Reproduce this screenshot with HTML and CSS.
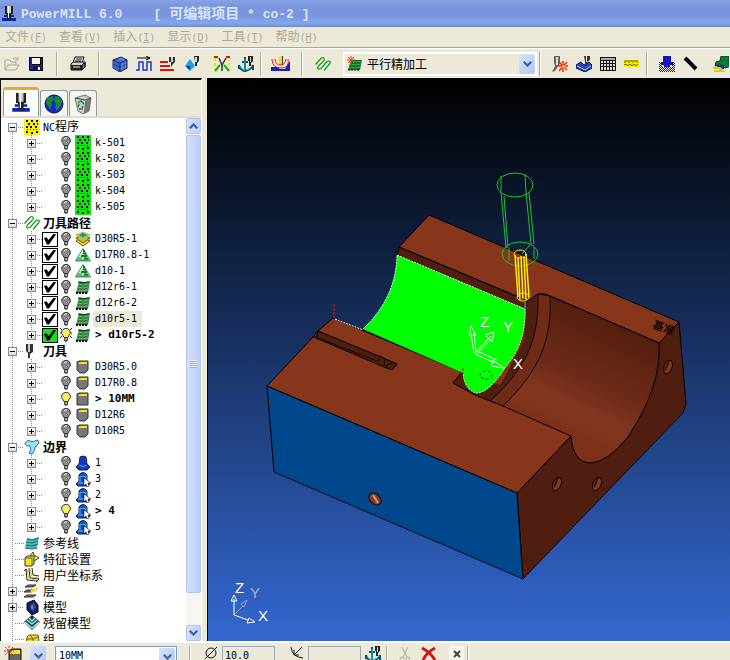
FILE: index.html
```html
<!DOCTYPE html>
<html lang="zh-CN">
<head>
<meta charset="utf-8">
<title>PowerMILL 6.0</title>
<link rel="stylesheet" href="styles.css">
</head>
<body>
<svg class="defs" width="0" height="0" aria-hidden="true">
  <defs>
    <pattern id="dither" width="2" height="2" patternUnits="userSpaceOnUse"><path d="M0 0h1v1H0zM1 1h1v1H1z" fill="#1420c0"/></pattern>
    <symbol id="i-mill" viewBox="0 0 16 16"><path d="M4 6h8v2H4zM3 9h10v2H3zM1 12h14v3H1z" fill="#0a2aa8"/><path d="M4 0h8v7l-2 2v5H6V9L4 7z" fill="#222"/><path d="M6 0h4v7H6z" fill="#c8c8c8"/><path d="M7 0h1v12H7z" fill="#fff"/></symbol>
    <symbol id="i-open" viewBox="0 0 16 16"><path d="M1 14V4h5l1 2h5v3M1 14l3-5h11l-3 5zM9 3q3-3 5 1m0-3v3h-3" fill="none" stroke="#aaa797"/></symbol>
    <symbol id="i-save" viewBox="0 0 16 16"><path d="M1 1h14v14H2l-1-1z" fill="#000"/><path d="M2 2h2v7h9V2h1v12H2z" fill="#1721b8"/><path d="M4 2h8v6H4z" fill="#f3f3ec"/><path d="M5 10h8v4H5z" fill="#10105c"/><path d="M10 11h2v3h-2z" fill="#fff"/></symbol>
    <symbol id="i-print" viewBox="0 0 16 16"><path d="M5 1h9l-2 6H3z" fill="#fff" stroke="#000"/><path d="M6 3h6M5 5h6" stroke="#000"/><path d="M1 8l2-2h12v5l-3 3H1z" fill="#d5d2b8" stroke="#000"/><path d="M1 9h11v5H1z" fill="#222"/><path d="M3 11h7" stroke="#eee"/><path d="M12 9l3-3v5l-3 3z" fill="#777" stroke="#000"/></symbol>
    <symbol id="i-cube" viewBox="0 0 16 16"><path d="M1 4l8-3 6 3v8l-7 4-7-4z" fill="#5b86da" stroke="#0a1c66"/><path d="M1 4l7 3v9l-7-4z" fill="#3b63c4"/><path d="M1 4l7 3 7-3M8 7v9" fill="none" stroke="#0a1c66"/><path d="M4 3l8 3v8M1 8l7 3 7-3" fill="none" stroke="#0a1c66" stroke-width=".5"/></symbol>
    <symbol id="i-feed" viewBox="0 0 16 16"><path d="M1 2h13M10 0l4 2-4 2" fill="none" stroke="#000"/><path d="M0 14h3V6h4v8h4V6h4v9" fill="none" stroke="#123ad8" stroke-width="1.500"/></symbol>
    <symbol id="i-rapid" viewBox="0 0 16 16"><path d="M0 5h8v2H0zM0 9h10v2H0zM0 13h14v2H0z" fill="#e01010"/><path d="M9 1h6v5l-2 2-2 3V6H9z" fill="#333"/><path d="M11 1h2v5h-2z" fill="#ccc"/></symbol>
    <symbol id="i-start" viewBox="0 0 16 16"><path d="M6 3l5 7-5 5-5-5z" fill="#12a4f4"/><path d="M6 5v5H2l4 4z" fill="#0b1b88"/><path d="M10 0h5v5l-2 2v3h-2V6z" fill="#222"/><path d="M11 1h2v5h-2z" fill="#ddd"/></symbol>
    <symbol id="i-lead" viewBox="0 0 16 16"><path d="M1 2v13M15 2v13" stroke="#f3e600" stroke-width="2" stroke-dasharray="3 2"/><path d="M1 15l5-6M15 15l-5-6" stroke="#12b424" stroke-width="2"/><path d="M0 1h4M12 1h4" stroke="#e01010" stroke-width="2"/><path d="M5 2l3 7 4-7M8 9v6" fill="none" stroke="#333" stroke-width="1.500"/></symbol>
    <symbol id="i-anchor" viewBox="0 0 16 16"><path d="M7 1v14M1 9q1 5 6 6 6-1 8-6M4 6h6M1 9v4M15 9v5" fill="none" stroke="#0b4f64" stroke-width="2"/><path d="M7 3v11M2 10q2 4 5 4M8 14q4-1 6-4" fill="none" stroke="#18cbd6"/><path d="M10 0h5v5l-2 2v3h-2V5h-1z" fill="#222"/><path d="M12 1h1v5h-1z" fill="#ddd"/></symbol>
    <symbol id="i-probe" viewBox="0 0 20 16"><path d="M8 0h3v9H8z" fill="#f0df18"/><path d="M11 0h1v9h-1z" fill="#333"/><path d="M1 3q0 9 9 9t7-9M4 3q0 6 6 6 4 0 5-6" fill="none" stroke="#e02018"/><path d="M0 11h6l3 2h5l5-8v10H0z" fill="#1420c0"/></symbol>
    <symbol id="i-path" viewBox="0 0 16 16"><path d="M.5 8.500L6 2.500q2-2 3 0t-1 3l-4 4q-2 2-1 3t3 0l6-7q2-1 3 0t-1 3l-5 6" fill="none" stroke="#0c9a1c" stroke-width="1.200"/></symbol>
    <symbol id="i-finish" viewBox="0 0 16 16"><path d="M4 4h11l-2 10H1z" fill="#176c28"/><path d="M4 5l5 1 6-1M3 8l6 1 5-1M2 11l6 1 5-1" stroke="#35b04c" fill="none"/><path d="M1 14h12" stroke="#111" stroke-dasharray="2 1"/><path d="M4 0v8M0 4h8M1 1l6 6M7 1L1 7" stroke="#e23b22"/></symbol>
    <symbol id="i-collide" viewBox="0 0 16 16"><path d="M2 0h6v8l-5 7-3 1 3-6-1-3z" fill="#666"/><path d="M4 1h2v8H4z" fill="#ddd"/><path d="M11 5v11M6 10h10M7 6l8 8M15 6l-8 9" stroke="#e33012" stroke-width="1.5"/><path d="M10 9h3v3h-3z" fill="#ffb31f"/></symbol>
    <symbol id="i-verify" viewBox="0 0 16 16"><path d="M0 9l5-3 3 3 5-3 3 3v3l-7 4-9-4z" fill="#2448bb" stroke="#0a1550"/><path d="M1 10l8 4 6-4" fill="none" stroke="#a7bdf0"/><path d="M8 0h6v4l-3 2v4H9V5z" fill="#333"/><path d="M10 0h1v6h-1z" fill="#eee"/></symbol>
    <symbol id="i-calc" viewBox="0 0 16 16"><path d="M0 1h16v14H0z" fill="#111"/><path d="M1 2h14v2H1z" fill="#aaa"/><path d="M1 5h2v2H1zm3 0h2v2H4zm3 0h2v2H7zm3 0h2v2h-2zm3 0h2v2h-2zM1 8h2v2H1zm3 0h2v2H4zm3 0h2v2H7zm3 0h2v2h-2zm3 0h2v2h-2zM1 11h2v3H1zm3 0h2v3H4zm3 0h2v3H7zm3 0h2v3h-2zm3 0h2v3h-2z" fill="#ddd"/></symbol>
    <symbol id="i-rule" viewBox="0 0 16 16"><path d="M0 4h15v7H0z" fill="#fff200"/><path d="M1 4v3M3 4v2M5 4v3M7 4v2M9 4v3M11 4v2M13 4v3M0 9l2-1 2 2 2-2 2 2 2-2 2 2 2-2" stroke="#67600a" fill="none"/></symbol>
    <symbol id="i-block" viewBox="0 0 16 16"><path d="M0 6h3v5h10V6h3v10H0z" fill="url(#dither)"/><path d="M4 0h8v6h2v3H2V6h2z" fill="#1018b8"/><path d="M5 9h6v2H5z" fill="#1018b8"/></symbol>
    <symbol id="i-pen" viewBox="0 0 16 16"><path d="M2 2l11 11" stroke="#000" stroke-width="4"/><path d="M1 4l11 11" stroke="#aaa"/></symbol>
    <symbol id="i-sim" viewBox="0 0 16 16"><path d="M8 0h8v7l2 3-6 2-5-4-5 2 1-4 4-1z" fill="#0d7a34" stroke="#093d25"/><path d="M2 9h9v4H7z" fill="#182ab0"/><path d="M0 12h7l3 3H1" fill="none" stroke="#d8cd10" stroke-width="2"/></symbol>
    <symbol id="i-globe" viewBox="0 0 20 20"><circle cx="10" cy="10" r="9" fill="#1523d2" stroke="#08115e"/><path d="M3 4l6-2 1 4-3 2 1 3-2 4-3-4-1-3zM11 2l4 1 3 4-1 4-4 6-2-4 1-3-2-3z" fill="#168c2b"/></symbol>
    <symbol id="i-bin" viewBox="0 0 18 20"><path d="M1 4l10-3 6 3-2 13-6 3-5-3z" fill="#c9c9c4" stroke="#777"/><path d="M11 7l6-3-2 13-5 3z" fill="#777"/><path d="M1 4l10 2 6-2" stroke="#444" fill="none"/><path d="M4 9l3-2 3 3M9 12l-1 3H5M4 13l1-3" fill="none" stroke="#278a38" stroke-width="1.5"/></symbol>
    <symbol id="i-nc" viewBox="0 0 16 16"><path d="M2 1h2v2H2zm5 0h2v2H7zm5 0h2v2h-2zM4 4h2v2H4zm5 0h2v2H9zm4 0h1v2h-1zM2 7h2v2H2zm4 0h2v2H6zm5 0h2v2h-2zM3 10h1v1H3zm3 0h1v1H6zm3 0h1v1H9zm3 0h1v1h-1zM2 12h2v2H2zm5 1h2v2H7zm5-1h2v2h-2z" fill="#111"/></symbol>
    <symbol id="i-bulb" viewBox="0 0 12 16"><path d="M6 1.500a4 4 0 0 1 3 7l-1 2H4l-1-2a4 4 0 0 1 3-7z" fill="currentColor" stroke="#333"/><path d="M4 4q1-2 3-1" stroke="#eee" fill="none"/><path d="M4 11h4v3l-2 1-2-1z" fill="#555"/><path d="M5 12h2" stroke="#ddd"/></symbol>
    <symbol id="i-rays" viewBox="0 0 12 16"><path d="M0 1l2 2M12 1l-2 2M0 6h1M11 6h1M0 11l2-2M12 11l-2-2" stroke="#222"/></symbol>
    <symbol id="i-layers" viewBox="0 0 16 16"><path d="M8 6l7 4-7 5-7-5z" fill="#f2dd28" stroke="#575312"/><path d="M8 4l7 3-7 5-7-5z" fill="#d9be1a" stroke="#575312"/><path d="M8 1l7 3-7 4-7-4z" fill="#49c8c1" stroke="#e0c012"/><path d="M5 4h6M8 2v4" stroke="#176c68"/></symbol>
    <symbol id="i-cone" viewBox="0 0 16 16"><path d="M8 1.500L15.500 14H.5z" fill="#d4f2d9" stroke="#1ba53a"/><path d="M8 4h2M8 6l3 1M6 9h6M9 11l4 1" stroke="#12792b" stroke-width="2"/><path d="M3 11h4M1 13h13" stroke="#12792b" stroke-width="1"/></symbol>
    <symbol id="i-raster" viewBox="0 0 16 16"><path d="M4 2l5 1 6-1-2 12H1z" fill="#1c8a38"/><path d="M3 5l5 1 6-1M3 8l5 1 5-1M2 11l5 1 6-1" stroke="#9a9f78" fill="none"/><path d="M3 3l5 1 6-1" stroke="#0c4e1d" fill="none"/><path d="M1 14h12" stroke="#111" stroke-width="2" stroke-dasharray="2 1"/></symbol>
    <symbol id="i-tool" viewBox="0 0 16 16"><path d="M2 1h7v8l-3 2v4H4v-5L2 8z" fill="#333"/><path d="M4 1h2v8H4z" fill="#ccc"/></symbol>
    <symbol id="i-ball" viewBox="0 0 16 16"><path d="M2 3l2-1h9v9l-3 3H5l-3-3z" fill="#777" stroke="#333"/><path d="M3 5l2-2h7v2z" fill="#efe414"/></symbol>
    <symbol id="i-end" viewBox="0 0 16 16"><path d="M2 3l2-1h9v12H2z" fill="#777" stroke="#333"/><path d="M3 5l2-2h7v2z" fill="#efe414"/></symbol>
    <symbol id="i-bound" viewBox="0 0 16 16"><path d="M1 4q2-4 5-2 4 2 6-1 3 0 3 3l-4 4q0 4-3 7l-3-1q3-3 1-7-5 0-5-3z" fill="#9be2f8" stroke="#1473a8"/></symbol>
    <symbol id="i-bell" viewBox="0 0 16 16"><path d="M5 2l3-1 3 1 1 7 3 3-3 3H4l-3-3 3-3z" fill="#173bb8" stroke="#071a66"/><path d="M4 10q4 3 8 0" stroke="#5fa4f2" fill="none"/></symbol>
    <symbol id="i-bellsel" viewBox="0 0 16 16"><path d="M4 4q4-5 8 0v6l3 3-3 2H3l-2-2 3-3z" fill="#1647bd" stroke="#071a66"/><path d="M4 6q4-2 8 0M5 6v7M11 6v5M3 12h7" stroke="#49b4f2" fill="none"/><path d="M9 7v8l2-2 1 3 2-1-1-3h3z" fill="#fff" stroke="#111" stroke-width=".6"/></symbol>
    <symbol id="i-pattern" viewBox="0 0 16 16"><path d="M3 3l5 1 7-2-2 11-5 1-7-1z" fill="#4cbdb9"/><path d="M3 4l5 1 7-2M2 7l6 1 6-2M2 10l6 1 6-2M1 13l7 1 5-1" fill="none" stroke="#176368"/></symbol>
    <symbol id="i-feature" viewBox="0 0 16 16"><path d="M6 5l3-4 1 3 5 3-5 3z" fill="#f5ee32" stroke="#444"/><path d="M1 7l2-2h7v8l-2 2H1z" fill="#f4e920" stroke="#333"/><path d="M1 7h7v8" stroke="#555" fill="none"/></symbol>
    <symbol id="i-axes" viewBox="0 0 16 16"><path d="M2 2l1 11 11 1M5 1l1 10 9 1M8 1l1 7 6 1M0 4l2-2 2 3M12 10l3 2-3 3" fill="none" stroke="#222"/><path d="M3 3l2 9 8 1M6 2l2 8 6 1" fill="none" stroke="#e8d711"/></symbol>
    <symbol id="i-level" viewBox="0 0 16 16"><path d="M4 2h8l-3 2H1zM3 7h8l-3 2H0zM3 12h9l-3 2H0z" fill="#777" stroke="#333"/><path d="M7 7l8-3-3 4-6 2z" fill="#f0df10"/></symbol>
    <symbol id="i-model" viewBox="0 0 16 16"><path d="M3 4l7-3 4 5v7l-6 3-5-5z" fill="#16205e" stroke="#080b29"/><path d="M10 3l-4 5 3 5 3-5z" fill="#3a479d"/><path d="M8 6v4" stroke="#aeb7ef"/></symbol>
    <symbol id="i-stock" viewBox="0 0 16 16"><path d="M8 0l8 7-8 8-8-8z" fill="#113b42"/><path d="M1 7l7 6 7-6M3 5l5 4 5-4M5 3l3 3 3-3" stroke="#a9e6e6" stroke-width="1.500" fill="none"/></symbol>
    <symbol id="i-group" viewBox="0 0 16 16"><path d="M3 6l2-2h9l1 5-3 5H2z" fill="#f0dd28" stroke="#6b6211"/><path d="M2 8h7v6M6 4l3 4 5-2" stroke="#6b6211" fill="none"/></symbol>
    <symbol id="i-newtool" viewBox="0 0 18 18"><path d="M5 5l3-2h9v15H5z" fill="#666" stroke="#111"/><path d="M6 6l3-2h7v4H6z" fill="#f3e414"/><path d="M5 0v9M0 5h10M1 1l8 8M9 1L1 9" stroke="#e02a22" stroke-dasharray="2 1"/></symbol>
    <symbol id="i-down" viewBox="0 0 12 8"><path d="M1 1l5 5 5-5" fill="none" stroke="#43608f" stroke-width="3"/></symbol>
    <symbol id="i-dia" viewBox="0 0 14 14"><circle cx="7" cy="7" r="5" fill="none" stroke="#111"/><path d="M1 13L13 1" stroke="#111"/></symbol>
    <symbol id="i-tip" viewBox="0 0 14 14"><path d="M1 1q1 10 12 11M12 1L4 9M4 4v5h5" fill="none" stroke="#111"/></symbol>
    <symbol id="i-cut" viewBox="0 0 16 16"><path d="M5 1l5 10M11 1L6 11" stroke="#aaa797" fill="none"/><circle cx="5" cy="13" r="2" fill="none" stroke="#aaa797"/><circle cx="11" cy="13" r="2" fill="none" stroke="#aaa797"/></symbol>
    <symbol id="i-del" viewBox="0 0 16 16"><path d="M1 2q8 4 13 12M14 2Q6 6 2 14" fill="none" stroke="#d01414" stroke-width="3"/></symbol>
  </defs>
</svg>

<header class="titlebar">
  <svg class="app-icon"><use href="#i-mill"/></svg>
  <h1><span class="pre">PowerMILL 6.0    [ </span><span class="han">可编辑项目</span><span class="pre"> * co-2 ]</span></h1>
</header>

<nav class="menubar">
  <button>文件<span class="lat">(<u>F</u>)</span></button>
  <button>查看<span class="lat">(<u>V</u>)</span></button>
  <button>插入<span class="lat">(<u>I</u>)</span></button>
  <button>显示<span class="lat">(<u>D</u>)</span></button>
  <button>工具<span class="lat">(<u>T</u>)</span></button>
  <button>帮助<span class="lat">(<u>H</u>)</span></button>
</nav>

<div class="toolbar">
  <div class="group">
    <button class="tool" aria-label="打开"><svg><use href="#i-open"/></svg></button>
    <button class="tool" aria-label="保存"><svg><use href="#i-save"/></svg></button>
  </div>
  <span class="sep"></span>
  <button class="tool" aria-label="打印"><svg><use href="#i-print"/></svg></button>
  <span class="sep"></span>
  <div class="group">
    <button class="tool" aria-label="毛坯"><svg><use href="#i-cube"/></svg></button>
    <button class="tool" aria-label="进给率"><svg><use href="#i-feed"/></svg></button>
    <button class="tool" aria-label="快进高度"><svg><use href="#i-rapid"/></svg></button>
    <button class="tool" aria-label="开始点"><svg><use href="#i-start"/></svg></button>
  </div>
  <div class="group spaced">
    <button class="tool" aria-label="切入切出"><svg><use href="#i-lead"/></svg></button>
    <button class="tool" aria-label="刀轴"><svg><use href="#i-anchor"/></svg></button>
  </div>
  <span class="sep tight"></span>
  <button class="tool wide" aria-label="探测"><svg><use href="#i-probe"/></svg></button>
  <span class="sep"></span>
  <button class="tool" aria-label="刀具路径策略"><svg><use href="#i-path"/></svg></button>
  <div class="combo strategy">
    <svg class="combo-icon"><use href="#i-finish"/></svg>
    <select aria-label="策略"><option>平行精加工</option></select>
    <span class="drop"><svg><use href="#i-down"/></svg></span>
  </div>
  <span class="sep tight"></span>
  <div class="group">
    <button class="tool" aria-label="碰撞检查"><svg><use href="#i-collide"/></svg></button>
    <button class="tool" aria-label="验证"><svg><use href="#i-verify"/></svg></button>
    <button class="tool" aria-label="计算器"><svg><use href="#i-calc"/></svg></button>
    <button class="tool" aria-label="测量"><svg><use href="#i-rule"/></svg></button>
  </div>
  <span class="sep tight"></span>
  <div class="group">
    <button class="tool" aria-label="毛坯显示"><svg><use href="#i-block"/></svg></button>
    <button class="tool" aria-label="画笔"><svg><use href="#i-pen"/></svg></button>
  </div>
  <div class="group spaced">
    <button class="tool" aria-label="仿真"><svg><use href="#i-sim"/></svg></button>
  </div>
</div>

<main class="work">
  <aside class="explorer">
    <div class="tabs">
      <button class="tab active" aria-label="浏览器"><svg><use href="#i-mill"/></svg></button>
      <button class="tab" aria-label="网络"><svg><use href="#i-globe"/></svg></button>
      <button class="tab" aria-label="回收站"><svg><use href="#i-bin"/></svg></button>
    </div>
    <div class="pane">
      <ul class="tree">
        <li>
          <div class="root"><button class="exp open" aria-label="折叠"></button><i class="dots"></i><svg class="ic yellow"><use href="#i-nc"/></svg><span class="name"><span class="lat">NC</span>程序</span></div>
          <ul class="branch">
            <li class="leaf"><button class="exp" aria-label="展开"></button><i class="dots"></i><i class="slot"></i><svg class="bulb"><use href="#i-bulb"/></svg><svg class="ic green"><use href="#i-nc"/></svg><span class="name lat">k-501</span></li>
            <li class="leaf"><button class="exp" aria-label="展开"></button><i class="dots"></i><i class="slot"></i><svg class="bulb"><use href="#i-bulb"/></svg><svg class="ic green"><use href="#i-nc"/></svg><span class="name lat">k-502</span></li>
            <li class="leaf"><button class="exp" aria-label="展开"></button><i class="dots"></i><i class="slot"></i><svg class="bulb"><use href="#i-bulb"/></svg><svg class="ic green"><use href="#i-nc"/></svg><span class="name lat">k-503</span></li>
            <li class="leaf"><button class="exp" aria-label="展开"></button><i class="dots"></i><i class="slot"></i><svg class="bulb"><use href="#i-bulb"/></svg><svg class="ic green"><use href="#i-nc"/></svg><span class="name lat">k-504</span></li>
            <li class="leaf"><button class="exp" aria-label="展开"></button><i class="dots"></i><i class="slot"></i><svg class="bulb"><use href="#i-bulb"/></svg><svg class="ic green"><use href="#i-nc"/></svg><span class="name lat">k-505</span></li>
          </ul>
        </li>
        <li>
          <div class="root"><button class="exp open" aria-label="折叠"></button><i class="dots"></i><svg class="ic"><use href="#i-path"/></svg><span class="name strong">刀具路径</span></div>
          <ul class="branch">
            <li class="leaf"><button class="exp" aria-label="展开"></button><i class="dots"></i><input type="checkbox" id="p1" checked><svg class="bulb"><use href="#i-bulb"/></svg><svg class="ic"><use href="#i-layers"/></svg><label for="p1" class="name lat">D30R5-1</label></li>
            <li class="leaf"><button class="exp" aria-label="展开"></button><i class="dots"></i><input type="checkbox" id="p2" checked><svg class="bulb"><use href="#i-bulb"/></svg><svg class="ic"><use href="#i-cone"/></svg><label for="p2" class="name lat">D17R0.8-1</label></li>
            <li class="leaf"><button class="exp" aria-label="展开"></button><i class="dots"></i><input type="checkbox" id="p3" checked><svg class="bulb"><use href="#i-bulb"/></svg><svg class="ic"><use href="#i-cone"/></svg><label for="p3" class="name lat">d10-1</label></li>
            <li class="leaf"><button class="exp" aria-label="展开"></button><i class="dots"></i><input type="checkbox" id="p4" checked><svg class="bulb"><use href="#i-bulb"/></svg><svg class="ic"><use href="#i-raster"/></svg><label for="p4" class="name lat">d12r6-1</label></li>
            <li class="leaf"><button class="exp" aria-label="展开"></button><i class="dots"></i><input type="checkbox" id="p5" checked><svg class="bulb"><use href="#i-bulb"/></svg><svg class="ic"><use href="#i-raster"/></svg><label for="p5" class="name lat">d12r6-2</label></li>
            <li class="leaf"><button class="exp" aria-label="展开"></button><i class="dots"></i><input type="checkbox" id="p6" checked><svg class="bulb"><use href="#i-bulb"/></svg><svg class="ic"><use href="#i-raster"/></svg><label for="p6" class="name lat chosen">d10r5-1</label></li>
            <li class="leaf"><button class="exp" aria-label="展开"></button><i class="dots"></i><input type="checkbox" id="p7" class="on" checked><svg class="bulb lit"><use href="#i-bulb"/><use href="#i-rays"/></svg><svg class="ic"><use href="#i-raster"/></svg><label for="p7" class="name lat strong">&gt; d10r5-2</label></li>
          </ul>
        </li>
        <li>
          <div class="root"><button class="exp open" aria-label="折叠"></button><i class="dots"></i><svg class="ic"><use href="#i-tool"/></svg><span class="name strong">刀具</span></div>
          <ul class="branch">
            <li class="leaf"><button class="exp" aria-label="展开"></button><i class="dots"></i><i class="slot"></i><svg class="bulb"><use href="#i-bulb"/></svg><svg class="ic"><use href="#i-ball"/></svg><span class="name lat">D30R5.0</span></li>
            <li class="leaf"><button class="exp" aria-label="展开"></button><i class="dots"></i><i class="slot"></i><svg class="bulb"><use href="#i-bulb"/></svg><svg class="ic"><use href="#i-ball"/></svg><span class="name lat">D17R0.8</span></li>
            <li class="leaf"><button class="exp" aria-label="展开"></button><i class="dots"></i><i class="slot"></i><svg class="bulb lit"><use href="#i-bulb"/></svg><svg class="ic"><use href="#i-end"/></svg><span class="name lat strong">&gt; 10MM</span></li>
            <li class="leaf"><button class="exp" aria-label="展开"></button><i class="dots"></i><i class="slot"></i><svg class="bulb"><use href="#i-bulb"/></svg><svg class="ic"><use href="#i-ball"/></svg><span class="name lat">D12R6</span></li>
            <li class="leaf"><button class="exp" aria-label="展开"></button><i class="dots"></i><i class="slot"></i><svg class="bulb"><use href="#i-bulb"/></svg><svg class="ic"><use href="#i-ball"/></svg><span class="name lat">D10R5</span></li>
          </ul>
        </li>
        <li>
          <div class="root"><button class="exp open" aria-label="折叠"></button><i class="dots"></i><svg class="ic"><use href="#i-bound"/></svg><span class="name strong">边界</span></div>
          <ul class="branch">
            <li class="leaf"><button class="exp" aria-label="展开"></button><i class="dots"></i><i class="slot"></i><svg class="bulb"><use href="#i-bulb"/></svg><svg class="ic"><use href="#i-bell"/></svg><span class="name lat">1</span></li>
            <li class="leaf"><button class="exp" aria-label="展开"></button><i class="dots"></i><i class="slot"></i><svg class="bulb"><use href="#i-bulb"/></svg><svg class="ic"><use href="#i-bellsel"/></svg><span class="name lat">3</span></li>
            <li class="leaf"><button class="exp" aria-label="展开"></button><i class="dots"></i><i class="slot"></i><svg class="bulb"><use href="#i-bulb"/></svg><svg class="ic"><use href="#i-bellsel"/></svg><span class="name lat">2</span></li>
            <li class="leaf"><button class="exp" aria-label="展开"></button><i class="dots"></i><i class="slot"></i><svg class="bulb lit"><use href="#i-bulb"/></svg><svg class="ic"><use href="#i-bellsel"/></svg><span class="name lat strong">&gt; 4</span></li>
            <li class="leaf"><button class="exp" aria-label="展开"></button><i class="dots"></i><i class="slot"></i><svg class="bulb"><use href="#i-bulb"/></svg><svg class="ic"><use href="#i-bellsel"/></svg><span class="name lat">5</span></li>
          </ul>
        </li>
        <li><div class="root bare"><i class="dots"></i><svg class="ic"><use href="#i-pattern"/></svg><span class="name">参考线</span></div></li>
        <li><div class="root bare"><i class="dots"></i><svg class="ic"><use href="#i-feature"/></svg><span class="name">特征设置</span></div></li>
        <li><div class="root bare"><i class="dots"></i><svg class="ic"><use href="#i-axes"/></svg><span class="name">用户坐标系</span></div></li>
        <li><div class="root"><button class="exp" aria-label="展开"></button><i class="dots"></i><svg class="ic"><use href="#i-level"/></svg><span class="name">层</span></div></li>
        <li><div class="root"><button class="exp" aria-label="展开"></button><i class="dots"></i><svg class="ic"><use href="#i-model"/></svg><span class="name">模型</span></div></li>
        <li><div class="root bare"><i class="dots"></i><svg class="ic"><use href="#i-stock"/></svg><span class="name">残留模型</span></div></li>
        <li><div class="root bare"><i class="dots"></i><svg class="ic"><use href="#i-group"/></svg><span class="name">组</span></div></li>
      </ul>
      <div class="scroll">
        <button class="arrow up" aria-label="向上"><svg><use href="#i-down"/></svg></button>
        <div class="thumb"><i class="grip"></i></div>
        <div class="track"></div>
        <button class="arrow" aria-label="向下"><svg><use href="#i-down"/></svg></button>
      </div>
    </div>
  </aside>

  <section class="view">
    <svg class="scene" viewBox="208 79 522 562" preserveAspectRatio="xMidYMid slice">
      <defs>
        <linearGradient id="bore" gradientUnits="userSpaceOnUse" x1="610" y1="322" x2="560" y2="430">
          <stop offset="0" stop-color="#541f10"/><stop offset=".55" stop-color="#6f2b18"/><stop offset=".78" stop-color="#833720"/><stop offset="1" stop-color="#80301a"/>
        </linearGradient>
      </defs>
      <!-- block silhouette, right end face -->
      <path d="M679 322L686 404L683 413L523 579L517 493L571 436L659 343Z" fill="#4f1e10" stroke="#000"/>
      <!-- rear top face -->
      <path d="M429 215L679 322L659 343L550 296Q541 292 535 297L528 301L399 247Z" fill="#87351b" stroke="#000"/>
      <path d="M399 247L528 301L537 330L525 312L397 255Z" fill="#4f1e10" stroke="#000"/>
      <!-- half bore -->
      <path d="M538 294Q544 293 550 296L659 343C661 375 648 407 627 438Q608 462 590 463Q573 462 571 436L503 406L475 395L453 383L462 372L525 309Z" fill="url(#bore)"/>
      <path d="M525 303L538 294C539 335 530 365 490 401L453 383L462 372L500 385L525 340Z" fill="#4f1e10"/>
      <path d="M538 294Q544 292 550 296C552 340 540 370 503 406L490 401C530 365 539 335 538 294Z" fill="#702b17" stroke="#000" stroke-width=".8"/>
      <path d="M526 302L538 294L550 296L659 343C661 375 648 407 627 438Q608 462 590 463Q573 462 571 436" fill="none" stroke="#000"/>
      <!-- front top face -->
      <path d="M267 386L313 337L318 331L333 318L462 372L453 383L475 395L503 406L571 436L517 493Z" fill="#87351b" stroke="#000"/>
      <path d="M267 386L517 493L523 579L274 472Z" fill="#00478b" stroke="#000"/>
      <path d="M274 472L523 579L683 413" fill="none" stroke="#1b3c79" stroke-dasharray="1 2"/>
      <!-- key slot -->
      <path d="M318 331L381 357L397 364L392 370L377 364L316 338Z" fill="#4f1e10" stroke="#000"/>
      <path d="M316 337L377 361M378 362l2-6 5 3-1 7M386 366l7-4" fill="none" stroke="#160805"/>
      <path d="M312 337h5l-1 2" fill="none" stroke="#000"/>
      <!-- machined surface -->
      <path d="M453 383l9-11 2 10 11 13z" fill="#4f1e10" stroke="#000" stroke-width=".6"/>
      <path d="M397 255L525 309C526 337 516 355 505 368C495 383 486 393 476 393Q464 389 463 373L363 329Q396 298 397 255Z" fill="#00ff00"/>
      <path d="M363 329Q396 298 397 255L525 309C526 337 516 355 505 368C495 383 486 393 476 393Q464 389 463 373" fill="none" stroke="#e4ffe4" stroke-dasharray="2 1"/>
      <path d="M335 319L363 330" stroke="#fff" stroke-dasharray="2 1"/>
      <ellipse cx="486" cy="375" rx="6" ry="4" fill="none" stroke="#07580d" stroke-dasharray="3 2"/>
      <path d="M334 304v14M463 368v6" stroke="#c22020" stroke-dasharray="3 1"/>
      <!-- drilled holes -->
      <g fill="#803a25" stroke="#160805">
        <ellipse cx="668" cy="367" rx="4" ry="7" transform="rotate(18 668 367)"/>
        <ellipse cx="557" cy="484" rx="4" ry="7" transform="rotate(22 557 484)"/>
        <ellipse cx="597" cy="484" rx="4" ry="7" transform="rotate(22 597 484)"/>
        <ellipse cx="375" cy="499" rx="7" ry="5" transform="rotate(42 375 499)"/>
      </g>
      <path d="M373 495l5 8" stroke="#d49a83" stroke-width="2"/>
      <path d="M665 370l4-9M554 487l4-9M594 487l4-9" stroke="#3b1509" stroke-width="2"/>
      <text class="stamp" x="652" y="328" transform="rotate(18 652 328)">基准</text>
      <!-- holder -->
      <g fill="none" stroke="#18c832">
        <ellipse cx="515" cy="185" rx="18" ry="12"/><ellipse cx="520" cy="254" rx="18" ry="12"/>
        <path d="M501 176v16l5 56M504 196l4 52M525 174l1 18 5 52M529 192l5 52M509 248v13M534 247v12M531 244l-9 10"/>
      </g>
      <!-- cutter -->
      <g fill="none" stroke="#fff000">
        <ellipse cx="520" cy="254" rx="6" ry="4"/><ellipse cx="523" cy="297" rx="6" ry="4"/>
        <path d="M515 255l3 42M518 258l2 42M521 256l2 43M524 257l2 43M526 254l3 43" stroke-width="1.500"/>
      </g>
      <path d="M525 302v12" stroke="#5ab7c4"/>
      <!-- workplane triad -->
      <g fill="none" stroke="#e6ffe6">
        <path d="M474 353l-3-20M476 351l-2-19M471 326l-2 10 7-1zM475 353l16-17M477 354l14-15M494 332l-9 3 7 7zM475 354l20 9M477 351l20 9M504 368l-11-8-2 6z"/>
      </g>
      <g class="axis"><text x="480" y="327">Z</text><text x="503" y="332">Y</text><text x="513" y="369">X</text></g>
      <!-- view triad -->
      <g stroke="#fff" fill="none"><path d="M234 615V599M234 595l-3 6h6zM234 615l14 5M255 622l-6-4-2 5z"/></g>
      <path d="M235 614l8-8M247 600l-6 4 3 3z" stroke="#96a3c8" fill="none"/>
      <g class="axis"><text x="235" y="593">Z</text><text class="dim" x="250" y="598">Y</text><text x="258" y="621">X</text></g>
    </svg>
  </section>
</main>

<footer class="toolstrip">
  <button class="newtool" aria-label="新刀具"><svg><use href="#i-newtool"/></svg></button>
  <button class="drop" aria-label="刀具类型"><svg><use href="#i-down"/></svg></button>
  <div class="combo toolpick">
    <select aria-label="刀具"><option>10MM</option></select>
    <span class="drop"><svg><use href="#i-down"/></svg></span>
  </div>
  <span class="sep"></span>
  <label for="dia" class="fieldlabel" aria-label="直径"><svg><use href="#i-dia"/></svg></label>
  <input class="num" id="dia" type="text" value="10.0">
  <label for="tip" class="fieldlabel late" aria-label="刀尖半径"><svg><use href="#i-tip"/></svg></label>
  <input class="num" id="tip" type="text" value="">
  <button class="tool" aria-label="刀具轴"><svg><use href="#i-anchor"/></svg></button>
  <span class="sep flush"></span>
  <button class="tool" aria-label="剪切"><svg><use href="#i-cut"/></svg></button>
  <button class="tool" aria-label="删除"><svg><use href="#i-del"/></svg></button>
  <button class="close" aria-label="关闭"><svg viewBox="0 0 8 8"><path d="M1 1l6 6M7 1L1 7" stroke="#444" stroke-width="2"/></svg></button>
  <span class="sep flush"></span>
</footer>
</body>
</html>
```

FILE: styles.css
```css
:root {
  --face: #ece9d8;
  --shade: #aca899;
  --cjk: "Noto Sans CJK SC", sans-serif;
  --mono: "Liberation Mono", "Noto Sans CJK SC", monospace;
}
* { box-sizing: border-box; }
body {
  margin: 0;
  height: 100vh;
  display: flex;
  flex-direction: column;
  overflow: hidden;
  background: var(--face);
  font: 12px/16px var(--cjk);
  color: #000;
}
button, input, select { font: inherit; color: inherit; margin: 0; }
button { padding: 0; border: 0; background: none; }
ul { margin: 0; padding: 0; list-style: none; }
svg { display: block; flex: none; }
.defs { position: absolute; }
.lat { font-family: "DejaVu Sans Mono", monospace; font-size: 10px; }

/* title and menu */
.titlebar {
  flex: none;
  display: flex;
  align-items: center;
  gap: 4px;
  height: 27px;
  padding-left: 1px;
  background: linear-gradient(#87a3e6, #7a94dc 25%, #7b96df 60%, #82a6ec 85%, #7b9ae0 94%, #6f86c0);
}
.app-icon { width: 16px; height: 16px; }
.titlebar h1 { margin: 0; font: bold 14px/20px var(--cjk); color: #d9e5fb; white-space: nowrap; }
.pre { white-space: pre; font-family: var(--mono); font-size: 13px; }
.menubar {
  flex: none;
  display: flex;
  align-items: center;
  gap: 12px;
  height: 21px;
  padding-left: 5px;
  border-bottom: 1px solid var(--shade);
  color: var(--shade);
}

/* toolbar */
.toolbar {
  flex: none;
  display: flex;
  align-items: center;
  height: 30px;
  border-top: 1px solid #fff;
  overflow: hidden;
}
.group { flex: none; display: flex; }
.group.spaced { margin-left: 6px; }
.tool { flex: none; width: 24px; display: flex; justify-content: center; }
.tool svg { width: 16px; height: 16px; }
.tool.wide svg { width: 20px; }
.sep {
  flex: none;
  width: 2px;
  height: 24px;
  margin: 0 8px;
  border-left: 1px solid var(--shade);
  border-right: 1px solid #fff;
}
.sep.tight { margin: 0 7px 0 2px; }
.combo {
  flex: none;
  display: flex;
  align-items: center;
  height: 24px;
  border: 1px solid #fff;
}
.combo select { flex: 1; min-width: 0; height: 20px; padding: 0; border: 0; appearance: none; background: none; }
.drop {
  flex: none;
  display: flex;
  align-items: center;
  justify-content: center;
  width: 16px;
  height: 100%;
  border-radius: 2px;
  background: linear-gradient(135deg, #d6e2fd, #b3c7f5);
}
.drop svg { width: 9px; height: 6px; }
.strategy { width: 194px; margin-left: 8px; padding-left: 2px; gap: 4px; border-width: 2px; }
.combo-icon { width: 16px; height: 16px; }

/* work area */
.work { flex: 1; min-height: 0; display: flex; gap: 5px; }
.explorer {
  flex: none;
  width: 202px;
  display: flex;
  flex-direction: column;
  border-top: 2px solid #111;
  border-left: 1px solid #111;
  border-right: 1px solid #fff;
}
.tabs { flex: none; display: flex; align-items: flex-end; gap: 1px; height: 36px; padding: 0 2px; }
.tab {
  width: 28px;
  height: 26px;
  display: flex;
  align-items: center;
  justify-content: center;
  border: 1px solid #919b9c;
  border-bottom: 0;
  border-radius: 3px 3px 0 0;
  background: #f5f4ee;
}
.tab.active { width: 36px; height: 29px; border-top: 3px solid #f3a431; background: #fcfcfa; }
.tab svg { width: 20px; height: 20px; }
.pane { flex: 1; min-height: 0; display: flex; border-top: 2px solid #e0ddcc; background: #fff; }

/* tree */
.tree {
  flex: 1;
  padding-top: 1px;
  overflow: hidden;
  background: repeating-linear-gradient(#8a8a8a 0 1px, transparent 1px 2px) 11px 8px / 1px 100% no-repeat;
}
.branch { background: repeating-linear-gradient(#8a8a8a 0 1px, transparent 1px 2px) 30px 0 / 1px calc(100% - 8px) no-repeat; }
.root, .leaf { display: flex; align-items: center; height: 16px; }
.root { padding-left: 7px; }
.root.bare { padding-left: 13px; }
.leaf { padding-left: 26px; }
.exp {
  flex: none;
  width: 9px;
  height: 9px;
  border: 1px solid #7b8ca5;
  background:
    linear-gradient(#000, #000) center / 5px 1px no-repeat,
    linear-gradient(#000, #000) center / 1px 5px no-repeat,
    linear-gradient(#fff, #dcd8cc);
}
.exp.open { background: linear-gradient(#000, #000) center / 5px 1px no-repeat, linear-gradient(#fff, #dcd8cc); }
.dots { flex: none; width: 6px; height: 1px; background: repeating-linear-gradient(90deg, transparent 0 1px, #8a8a8a 1px 2px); }
.root .dots { width: 7px; }
.root.bare .dots { width: 10px; }
.slot { flex: none; width: 16px; }
.leaf input {
  flex: none;
  appearance: none;
  width: 16px;
  height: 15px;
  border: 1px solid #000;
  background: #fff;
}
.leaf input.on { background: #0be80b; }
.leaf input::before {
  content: "";
  display: block;
  height: 11px;
  margin: 1px;
  background: #000;
  clip-path: polygon(0 40%, 22% 35%, 36% 60%, 82% 0, 100% 8%, 42% 100%, 24% 100%);
}
.bulb { width: 12px; height: 16px; margin: 0 3px 0 2px; color: #8c8c8c; }
.bulb.lit { color: #fff04a; }
.ic { width: 16px; height: 16px; }
.yellow { background: #fff200; }
.green { background: #0be80b; }
.name { margin-left: 2px; padding: 0 2px; white-space: nowrap; }
.root .name { margin-left: 3px; padding: 0; }
.strong { font-weight: bold; }
.lat.strong { font-size: 11px; }
.chosen { padding-right: 5px; background: var(--face); }

/* scrollbar */
.scroll { flex: none; width: 15px; display: flex; flex-direction: column; gap: 1px; background: #f6f5f0; }
.arrow, .thumb { border: 1px solid #b3c6f0; border-radius: 2px; background: linear-gradient(90deg, #d3dffd, #bccffb); }
.arrow { flex: none; height: 16px; display: flex; align-items: center; justify-content: center; }
.arrow svg { width: 9px; height: 6px; }
.arrow.up svg { transform: rotate(180deg); }
.thumb { flex: 46; display: flex; align-items: center; justify-content: center; }
.track { flex: 3; }
.grip { width: 7px; height: 8px; background: repeating-linear-gradient(#eef3ff 0 1px, #8fa9e4 1px 2px); }

/* 3D view */
.view {
  flex: 1;
  min-width: 0;
  border-top: 1px solid #000;
  border-left: 1px solid #000;
  background: linear-gradient(#000, #3368d0);
}
.scene { width: 100%; height: 100%; }
.axis { font: 15px "Liberation Sans", sans-serif; fill: #fff; }
.axis .dim { fill: #a9b2cc; }
.stamp { font: bold 11px var(--cjk); fill: #120603; }

/* bottom strip */
.toolstrip {
  flex: none;
  display: flex;
  align-items: flex-start;
  height: 19px;
  padding: 3px 0 0 4px;
  border-top: 2px solid #fff;
  overflow: hidden;
}
.newtool svg { width: 18px; height: 18px; }
.toolstrip > .drop { height: 20px; margin: 0 9px 0 8px; }
.toolpick { width: 122px; height: 22px; padding: 1px; background: #fff; border-color: #7f9db9; font: 10px/16px "DejaVu Sans Mono", monospace; }
.toolpick select { height: 16px; align-self: flex-start; padding-left: 2px; }
.toolstrip .sep { margin: 0 10px 0 12px; }
.toolstrip .sep.flush { margin: 0 1px; }
.toolstrip .sep.flush + .tool { margin-left: 4px; }
.fieldlabel { padding: 0 4px 0 3px; }
.fieldlabel.late { padding-left: 15px; }
.fieldlabel svg { width: 14px; height: 14px; }
.num {
  flex: none;
  width: 53px;
  height: 22px;
  padding: 0 2px 4px;
  border: 1px solid #9aaab5;
  background: var(--face);
  font: 10px/16px "DejaVu Sans Mono", monospace;
}
.close { width: 15px; height: 15px; margin: 0 2px 0 8px; display: flex; align-items: center; justify-content: center; background: #f7f6f0; }
.close svg { width: 8px; height: 8px; }
```
